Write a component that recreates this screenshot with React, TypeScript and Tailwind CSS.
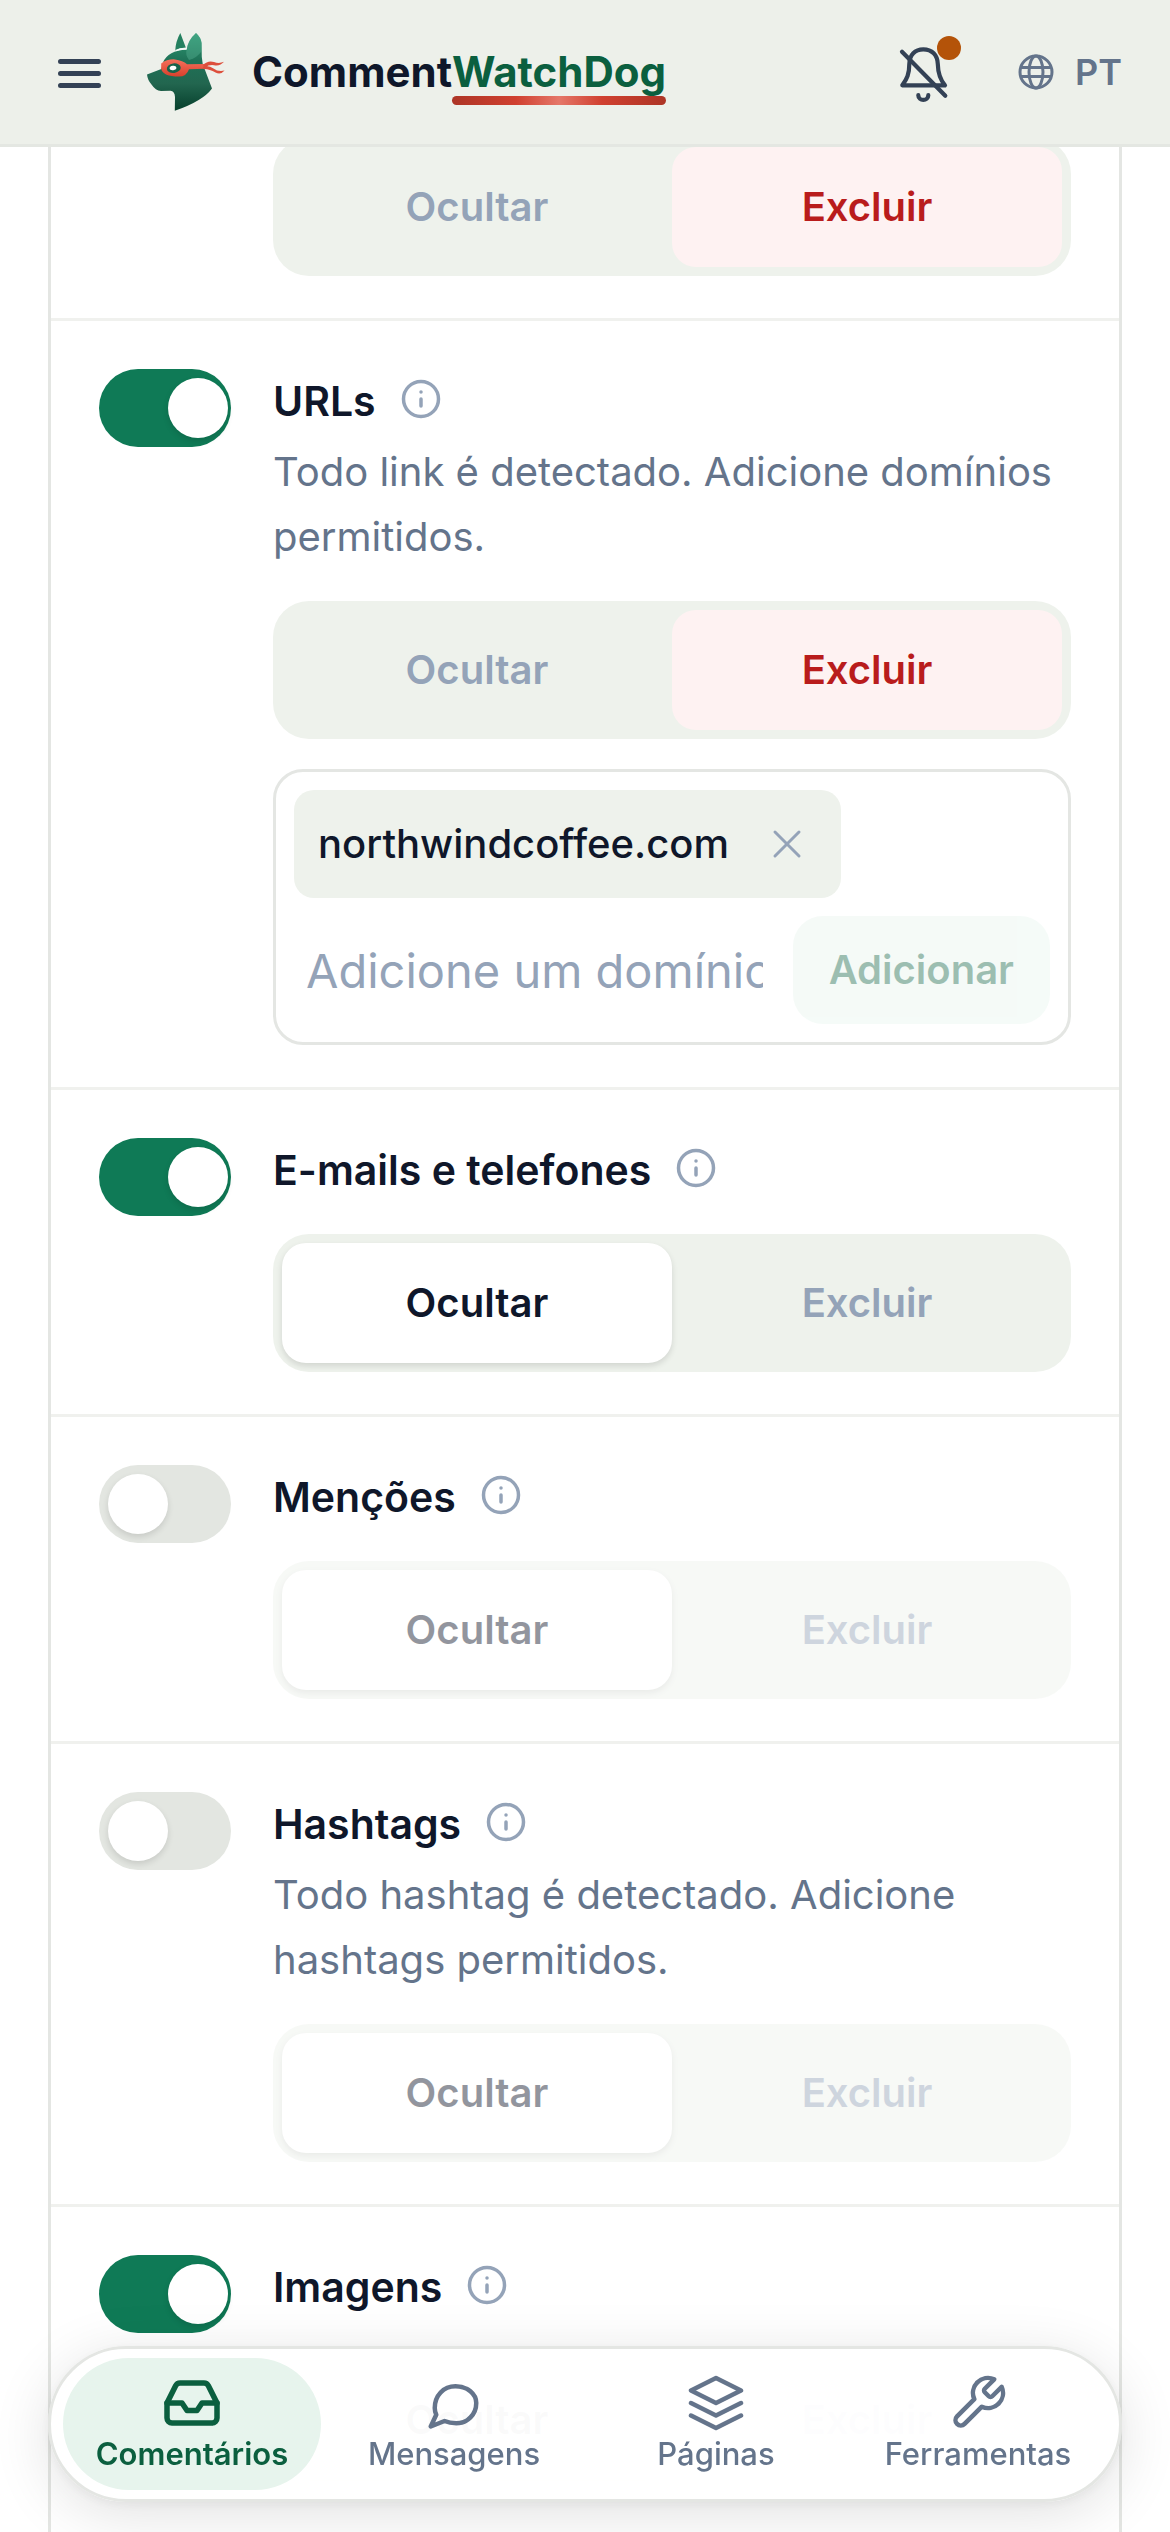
import { useState } from "react";
import { Info, X } from "lucide-react";
import clsx from "clsx";

type Action = "hide" | "delete";

type Rule = {
  id: string;
  title?: string;
  description?: string;
  enabled: boolean;
  action: Action;
  domains?: string[];
};

const rules: Rule[] = [
  { id: "previous", enabled: true, action: "delete" },
  {
    id: "urls",
    title: "URLs",
    description: "Todo link é detectado. Adicione domínios permitidos.",
    enabled: true,
    action: "delete",
    domains: ["northwindcoffee.com"],
  },
  { id: "contacts", title: "E-mails e telefones", enabled: true, action: "hide" },
  { id: "mentions", title: "Menções", enabled: false, action: "hide" },
  {
    id: "hashtags",
    title: "Hashtags",
    description: "Todo hashtag é detectado. Adicione hashtags permitidos.",
    enabled: false,
    action: "hide",
  },
  { id: "images", title: "Imagens", enabled: true, action: "hide" },
];

const DogLogo = () => (
  <svg viewBox="0 0 78 78" className="size-[78px] shrink-0" aria-hidden="true">
    <defs>
      <linearGradient id="dog" x1="0" y1="0" x2="0" y2="1">
        <stop offset="0" stopColor="#2f9a75" />
        <stop offset="0.35" stopColor="#1f7257" />
        <stop offset="0.65" stopColor="#22664f" />
        <stop offset="1" stopColor="#063f2c" />
      </linearGradient>
      <linearGradient id="mask" x1="0" y1="0" x2="0" y2="1">
        <stop offset="0" stopColor="#f4705c" />
        <stop offset="1" stopColor="#d8402c" />
      </linearGradient>
    </defs>
    <path d="M33.3 0 L38.8 14.5 Q33 14.6 28.2 17.8 Q28.6 8.5 33.3 0Z" fill="#24805f" />
    <path
      d="M49 0 Q54 4.5 54.6 10 L54.8 24 Q55 31 58 37 L65 55.5 Q56 68 27.8 77.8 L28 64 Q27.6 58 23.5 57.8 L14 58 Q8.5 57.6 4.5 51.5 Q.5 47 0 41.5 L14.3 36 L16 29.5 Q21 17.5 39.6 16.8 Q41 7 49 0Z"
      fill="url(#dog)"
    />
    <path d="M49 0 Q54 4.5 54.6 10 L54.8 18 Q50 25 42 27 Q38 22 39.6 16.8 Q41 7 49 0Z" fill="#5bb596" opacity=".4" />
    <path d="M28.5 17.6 Q33 15.3 39.6 15.8" fill="none" stroke="#f4fbf8" strokeWidth="1.4" />
    <path
      d="M14.2 30.4 Q20 26 28 26.4 Q36 27.5 40 31.2 L57 31 L57 35.8 L42 36.2 Q39.5 43.5 32 43.6 Q16 43.5 14.2 36Z"
      fill="url(#mask)"
    />
    <path
      d="M56 32 Q61 27 67 29 Q72 31 77 28.8 Q73 33.5 67 32.2 Q62 31.5 58 34.5Z M56 33.4 Q62 31.8 66.5 35.5 Q71 39 77.6 37.6 Q74 42 68.5 39.6 Q62 35.5 56 36Z"
      fill="#dd4f3c"
    />
    <ellipse cx="26.8" cy="35.2" rx="7" ry="4.8" fill="#17634a" transform="rotate(-8 26.8 35.2)" />
    <ellipse cx="26" cy="35" rx="3.4" ry="2.2" fill="#fff" transform="rotate(-8 26 35)" />
  </svg>
);

const Header = () => (
  <header className="fixed inset-x-0 top-0 z-20 flex h-[147px] items-center border-b-[3px] border-[#e4e7e2] bg-[#edf0ea] px-12">
    <button aria-label="Menu" className="mr-[39px] text-[#334155]">
      <svg viewBox="0 0 60 60" className="size-[60px]" fill="none" stroke="currentColor" strokeWidth="5" strokeLinecap="round">
        <path d="M12.5 19.5h38M12.5 31.5h38M12.5 43.5h38" />
      </svg>
    </button>
    <a href="#" className="flex items-center gap-[27px] text-[42px] leading-[54px] font-bold text-[#0f172a]">
      <DogLogo />
      <span>
        Comment
        <span className="relative inline-block text-[#0b5f3f]">
          WatchDog
          <span className="absolute inset-x-0 top-[51px] h-[9px] rounded-full bg-[linear-gradient(90deg,#ad3526,#d04030_30%,#e57769_50%,#d04030_70%,#ad3526)]" />
        </span>
      </span>
    </a>
    <div className="ml-auto flex items-center">
      <button aria-label="Notificações" className="relative mr-[62px] text-[#334155]">
        <svg
          viewBox="0 0 60 60"
          className="size-[60px]"
          fill="none"
          stroke="currentColor"
          strokeWidth="4.2"
          strokeLinecap="round"
          strokeLinejoin="round"
        >
          <path d="M9.3 43.3C14 37 16.3 32 16.3 22C16.5 13 22 7.3 30.3 7.3C39 7.3 44.5 13 44.8 22C45 32 47.5 38 52 43.3Z" />
          <path d="M25.3 53.2C25.3 59.4 35.3 59.4 35.3 53.2" />
          <path d="M9 9.7 52.3 53.7" />
        </svg>
        <span className="absolute -top-1.5 left-11 size-6 rounded-full bg-[#b45309]" />
      </button>
      <button className="flex items-center gap-[18px] text-[36px] leading-[54px] font-semibold text-[#64748b]">
        <svg viewBox="0 0 42 42" className="size-[42px]" fill="none" stroke="currentColor" strokeWidth="3">
          <circle cx="21" cy="21" r="16" />
          <ellipse cx="21" cy="21" rx="7" ry="16" />
          <path d="M6 16.5h30M6 25.5h30" />
        </svg>
        PT
      </button>
    </div>
  </header>
);

type ActionPickerProps = {
  value: Action;
  disabled: boolean;
  onChange: (value: Action) => void;
};

const ActionPicker = ({ value, disabled, onChange }: ActionPickerProps) => (
  <div
    role="group"
    className={clsx(
      "grid grid-cols-2 rounded-[36px] bg-[#eef2ec] p-[9px] text-[40px] leading-[60px] font-semibold",
      disabled && "opacity-45"
    )}
  >
    <button
      disabled={disabled}
      onClick={() => onChange("hide")}
      className={clsx(
        "h-[120px] rounded-3xl",
        value === "hide" ? "bg-white text-[#0f172a] shadow-[0_3px_6px_rgba(0,0,0,0.12)]" : "text-[#94a3b8]"
      )}
    >
      Ocultar
    </button>
    <button
      disabled={disabled}
      onClick={() => onChange("delete")}
      className={clsx("h-[120px] rounded-3xl", value === "delete" ? "bg-[#fef2f2] text-[#b91c1c]" : "text-[#94a3b8]")}
    >
      Excluir
    </button>
  </div>
);

const DomainBox = ({ initial }: { initial: string[] }) => {
  const [domains, setDomains] = useState(initial);
  const [draft, setDraft] = useState("");

  const add = () => {
    setDomains([...domains, draft.trim()]);
    setDraft("");
  };

  return (
    <div className="mt-[30px] flex flex-col items-start gap-[18px] rounded-[30px] border-[3px] border-[#e4e6e3] p-[18px]">
      {domains.map((domain) => (
        <div
          key={domain}
          className="flex h-[108px] items-center gap-1 rounded-[20px] bg-[#eef2ec] pl-6 text-[40px] leading-[60px] font-medium text-[#0f172a]"
        >
          {domain}
          <button
            aria-label={`Remover ${domain}`}
            onClick={() => setDomains(domains.filter((d) => d !== domain))}
            className="flex size-[108px] items-center justify-center text-[#94a3b8]"
          >
            <X size={48} strokeWidth={1.5} />
          </button>
        </div>
      ))}
      <div className="flex w-full gap-[18px]">
        <input
          aria-label="Adicione um domínio"
          placeholder="Adicione um domínio"
          value={draft}
          onChange={(e) => setDraft(e.target.value)}
          className="h-[108px] min-w-0 flex-1 px-3 text-[47px] text-[#0f172a] outline-none placeholder:text-[#94a3b8]"
        />
        <button
          disabled={!draft.trim()}
          onClick={add}
          className="h-[108px] rounded-[30px] bg-[#e7f4ed] px-9 text-[40px] leading-[60px] font-semibold text-[#0b5f3f] disabled:opacity-40"
        >
          Adicionar
        </button>
      </div>
    </div>
  );
};

const RuleRow = ({ rule }: { rule: Rule }) => {
  const [enabled, setEnabled] = useState(rule.enabled);
  const [action, setAction] = useState(rule.action);

  return (
    <li className="grid grid-cols-[132px_minmax(0,1fr)] gap-x-[42px] border-[#f0f1ee] px-12 pb-[42px] not-first:border-t-[3px] not-first:pt-12">
      {rule.title && (
        <input
          id={rule.id}
          type="checkbox"
          role="switch"
          checked={enabled}
          onChange={(e) => setEnabled(e.target.checked)}
          className="relative h-[78px] w-[132px] appearance-none rounded-full bg-[#e3e6e1] before:absolute before:top-[9px] before:left-[9px] before:size-[60px] before:rounded-full before:bg-white before:shadow-[0_3px_6px_rgba(0,0,0,0.12)] checked:bg-[#0f7a56] checked:before:left-[69px]"
        />
      )}
      <div className="col-start-2">
        {rule.title && (
          <div className="flex h-[60px] items-center gap-6 text-[41px] leading-[60px] font-semibold text-[#0f172a]">
            <label htmlFor={rule.id} className="mt-1">
              {rule.title}
            </label>
            <button aria-label={`Sobre ${rule.title}`} className="text-[#94a3b8]">
              <Info size={42} />
            </button>
          </div>
        )}
        {rule.description && (
          <p className="mt-2.5 text-[40px] leading-[65px] text-[#64748b]">{rule.description}</p>
        )}
        <div className={clsx(rule.title && (rule.description ? "mt-8" : "mt-9"))}>
          <ActionPicker value={action} disabled={!enabled} onChange={setAction} />
        </div>
        {rule.domains && <DomainBox initial={rule.domains} />}
      </div>
    </li>
  );
};

const tabs = [
  {
    label: "Comentários",
    icon: (
      <>
        <path d="M22 12h-6l-2 3h-4l-2-3H2" />
        <path d="M5.45 5.11 2 12v6a2 2 0 0 0 2 2h16a2 2 0 0 0 2-2v-6l-3.45-6.89A2 2 0 0 0 16.76 4H7.24a2 2 0 0 0-1.79 1.11z" />
      </>
    ),
  },
  {
    label: "Mensagens",
    icon: (
      <path d="M12.6 5.3C17.4 5.3 20.9 8.4 20.9 12C20.9 16.6 17.4 20.1 12.9 20.1C11 20.1 9.6 19.8 8.2 19.2L2.7 21.4L4.9 16.7C4.5 15.8 4.3 14.9 4.3 14C4.3 9 7.8 5.3 12.6 5.3Z" />
    ),
  },
  {
    label: "Páginas",
    icon: (
      <>
        <path d="M12 2 2 7l10 5 10-5z" />
        <path d="m2 12 10 5 10-5" />
        <path d="m2 17 10 5 10-5" />
      </>
    ),
  },
  {
    label: "Ferramentas",
    icon: (
      <path d="M14.7 6.3a1 1 0 0 0 0 1.4l1.6 1.6a1 1 0 0 0 1.4 0l3.77-3.77a6 6 0 0 1-7.94 7.94l-6.91 6.91a2.12 2.12 0 0 1-3-3l6.91-6.91a6 6 0 0 1 7.94-7.94l-3.76 3.76z" />
    ),
  },
];

const TabBar = () => {
  const [active, setActive] = useState(0);

  return (
    <nav className="fixed inset-x-12 bottom-[30px] z-20 grid grid-cols-4 gap-1 rounded-full border-[3px] border-[#e4e6e3] bg-white/98 px-3 py-[9px] shadow-[0_12px_60px_rgba(0,0,0,0.12),0_3px_12px_rgba(0,0,0,0.05)]">
      {tabs.map((tab, i) => (
        <button
          key={tab.label}
          onClick={() => setActive(i)}
          className={clsx(
            "flex flex-col items-center rounded-full py-[15px] text-[31px] leading-[42px]",
            i === active ? "bg-[#e7f4ed] font-semibold text-[#0b5f3f]" : "font-medium text-[#64748b]"
          )}
        >
          <svg
            viewBox="0 0 24 24"
            className="size-[60px]"
            fill="none"
            stroke="currentColor"
            strokeWidth={i === active ? 2.2 : 1.8}
            strokeLinecap="round"
            strokeLinejoin="round"
          >
            {tab.icon}
          </svg>
          {tab.label}
        </button>
      ))}
    </nav>
  );
};

const App = () => (
  <div className="flex min-h-screen flex-col bg-white font-['Inter',sans-serif]">
    <Header />
    <main className="flex flex-1 flex-col px-12 pt-[138px]">
      <ul className="flex-1 border-x-[3px] border-[#e4e6e3]">
        {rules.map((rule) => (
          <RuleRow key={rule.id} rule={rule} />
        ))}
      </ul>
    </main>
    <TabBar />
  </div>
);

export default App;
